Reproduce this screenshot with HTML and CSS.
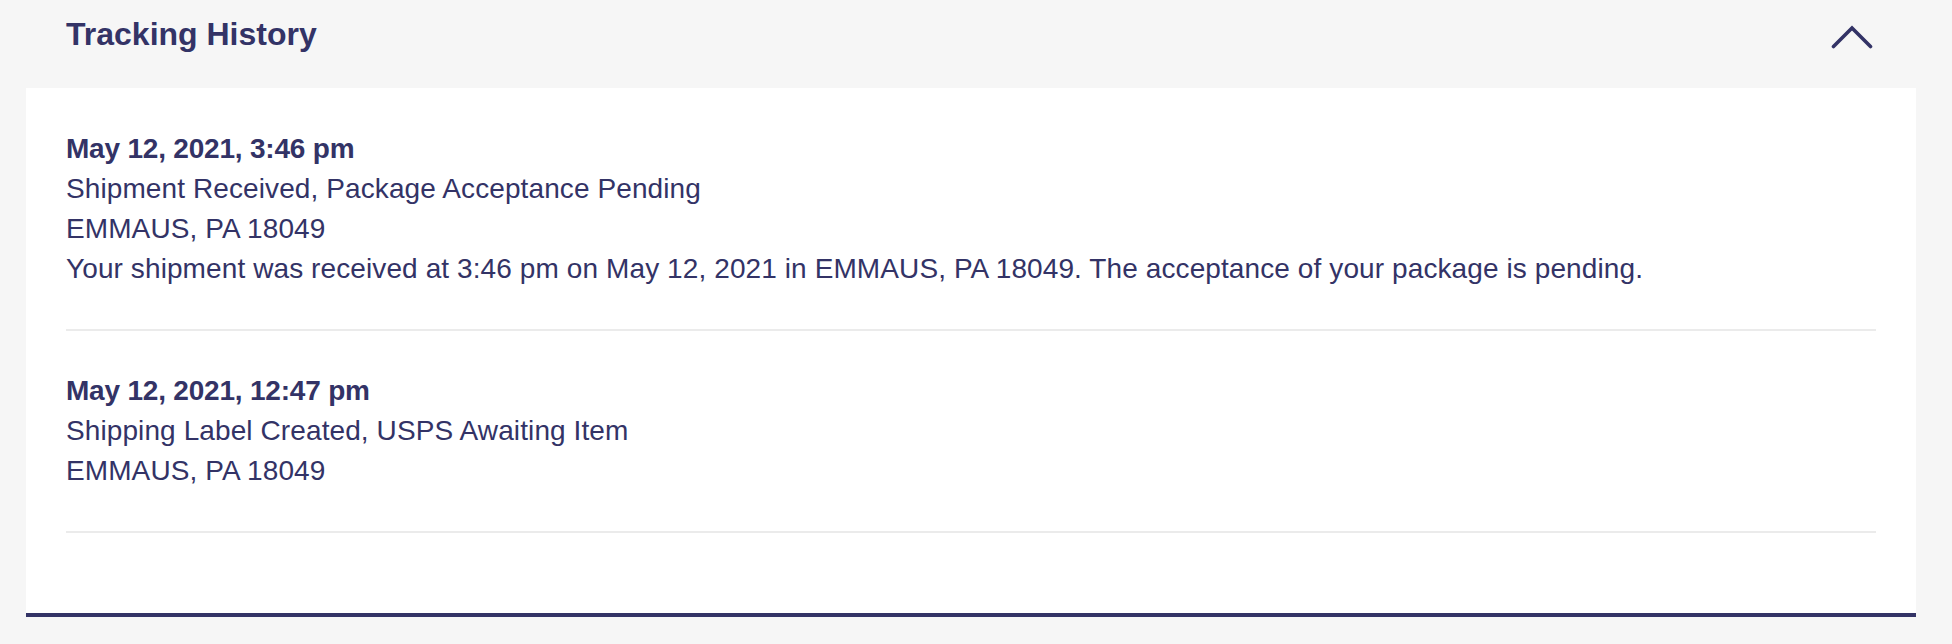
FILE: index.html
```html
<!DOCTYPE html>
<html lang="en">
<head>
<meta charset="utf-8">
<title>Tracking History</title>
<link rel="stylesheet" href="styles.css">
</head>
<body>
<section class="tracking">
  <div class="tracking-header">
    <h2 class="tracking-title">Tracking History</h2>
    <svg class="chevron" width="42" height="24" viewBox="0 0 42 24" aria-hidden="true">
      <polyline points="2.5,21.5 21,3 39.5,21.5" fill="none" stroke="#333366" stroke-width="3.6" stroke-linecap="round" stroke-linejoin="miter"/>
    </svg>
  </div>
  <div class="tracking-panel">
    <div class="event">
      <div class="event-date">May 12, 2021, 3:46 pm</div>
      <div class="event-line">Shipment Received, Package Acceptance Pending</div>
      <div class="event-line">EMMAUS, PA 18049</div>
      <div class="event-line">Your shipment was received at 3:46 pm on May 12, 2021 in EMMAUS, PA 18049. The acceptance of your package is pending.</div>
    </div>
    <div class="event">
      <div class="event-date">May 12, 2021, 12:47 pm</div>
      <div class="event-line">Shipping Label Created, USPS Awaiting Item</div>
      <div class="event-line">EMMAUS, PA 18049</div>
    </div>
  </div>
</section>
</body>
</html>
```
FILE: styles.css
```css
html, body {
  margin: 0;
  padding: 0;
  background: #f6f6f6;
}

body {
  font-family: "Liberation Sans", Arial, Helvetica, sans-serif;
  color: #333366;
}

.tracking {
  margin: 0 36px 0 26px;
}

.tracking-header {
  display: flex;
  align-items: center;
  justify-content: space-between;
  padding: 14px 43px 34px 40px;
}

.tracking-title {
  margin: 0;
  font-size: 32px;
  line-height: 40px;
  font-weight: 700;
  color: #333366;
}

.chevron {
  display: block;
  margin-top: 6px;
}

.tracking-panel {
  background: #ffffff;
  padding: 1px 40px 80px 40px;
  border-bottom: 4px solid #333366;
}

.event {
  padding: 40px 0 40px 0;
  border-bottom: 2px solid #ebebeb;
}

.event-date {
  font-size: 28px;
  line-height: 40px;
  font-weight: 700;
  letter-spacing: -0.2px;
}

.event-line {
  font-size: 28px;
  line-height: 40px;
  font-weight: 400;
  letter-spacing: 0.1px;
}
```
